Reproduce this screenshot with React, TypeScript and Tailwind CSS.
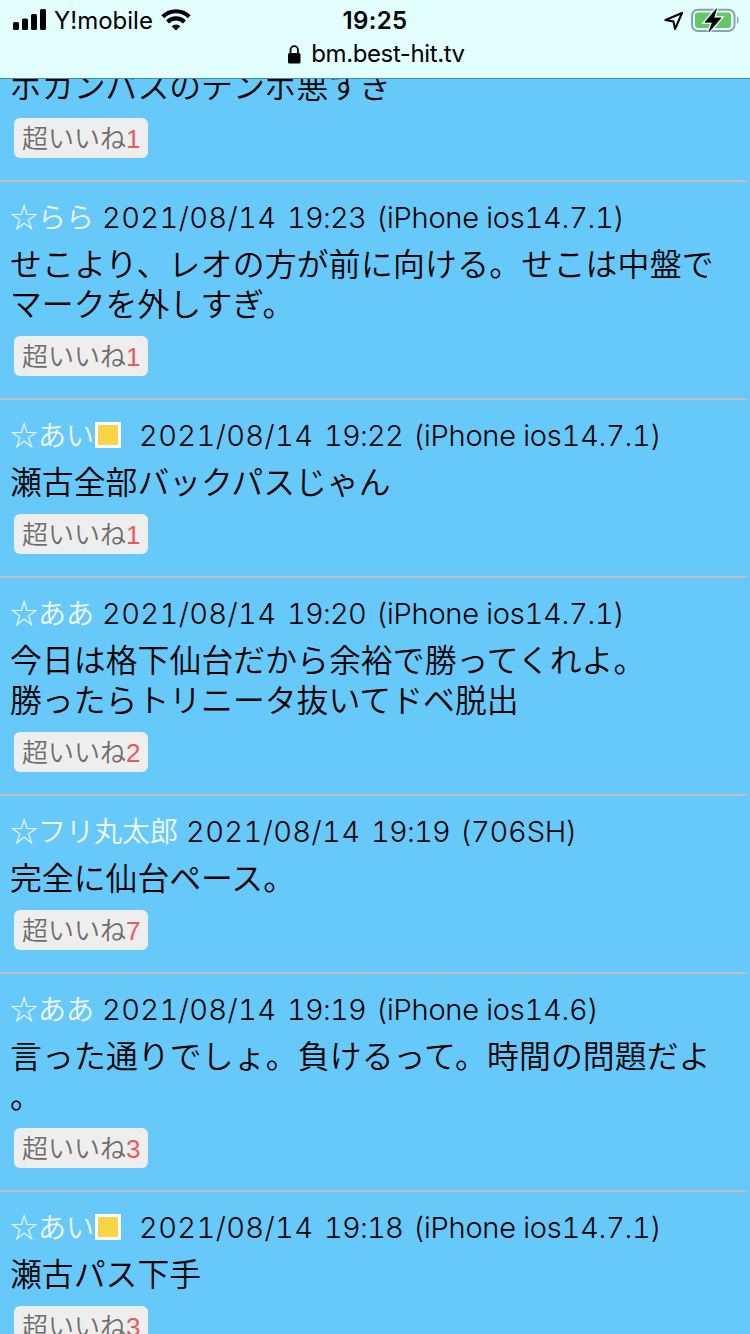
type Line = { text: string; spacing?: string };

type Post = {
  name: string;
  card?: boolean;
  date: string;
  time: string;
  device: string;
  lines: Line[];
  likes: number;
};

const posts: Post[] = [
  {
    name: "☆らら",
    date: "2021/08/14",
    time: "19:23",
    device: "(iPhone ios14.7.1)",
    lines: [{ text: "せこより、レオの方が前に向ける。せこは中盤で", spacing: "tracking-[0.28px]" }, { text: "マークを外しすぎ。" }],
    likes: 1,
  },
  { name: "☆あい", card: true, date: "2021/08/14", time: "19:22", device: "(iPhone ios14.7.1)", lines: [{ text: "瀬古全部バックパスじゃん" }], likes: 1 },
  {
    name: "☆ああ",
    date: "2021/08/14",
    time: "19:20",
    device: "(iPhone ios14.7.1)",
    lines: [{ text: "今日は格下仙台だから余裕で勝ってくれよ。", spacing: "tracking-[0.1px]" }, { text: "勝ったらトリニータ抜いてドベ脱出" }],
    likes: 2,
  },
  { name: "☆フリ丸太郎", date: "2021/08/14", time: "19:19", device: "(706SH)", lines: [{ text: "完全に仙台ペース。" }], likes: 7 },
  {
    name: "☆ああ",
    date: "2021/08/14",
    time: "19:19",
    device: "(iPhone ios14.6)",
    lines: [{ text: "言った通りでしょ。負けるって。時間の問題だよ", spacing: "tracking-[0.17px]" }, { text: "。" }],
    likes: 3,
  },
  { name: "☆あい", card: true, date: "2021/08/14", time: "19:18", device: "(iPhone ios14.7.1)", lines: [{ text: "瀬古パス下手" }], likes: 3 },
];

function LikeButton({ count }: { count: number }) {
  return (
    <button className="ml-[14px] mt-[14px] mb-[22px] flex h-10 w-[134px] items-center rounded-[6px] bg-[#eeeeee] pl-2 text-[26px] leading-10 whitespace-nowrap text-[#6e6e6e]">
      <span className="w-[104px] pb-[3px]">超いいね</span>
      <span className="pt-px font-['Liberation_Sans','Noto_Sans_CJK_JP',sans-serif] font-normal text-[#e35d5b]">{count}</span>
    </button>
  );
}

function Body({ lines }: { lines: Line[] }) {
  return (
    <div className="pl-[10px] text-[31.8px] leading-10 whitespace-nowrap">
      {lines.map((line) => (
        <p key={line.text} className={line.spacing ?? "tracking-[0.05px]"}>
          {line.text}
        </p>
      ))}
    </div>
  );
}

function PostItem({ post }: { post: Post }) {
  return (
    <article className="w-[747px] border-t-2 border-[#bdbdbd]">
      <div className="flex h-[60px] items-center pt-[12px] pl-[10px] whitespace-nowrap">
        <span className="pb-[5px] text-[28px] leading-10 text-[#f2faff]">{post.name}</span>
        {post.card && <span className="mr-[10px] mb-[3px] ml-px size-[26px] border-[3px] border-white bg-[#f8d547]" />}
        <span className="ml-[8px] flex font-['Inter','Noto_Sans_CJK_JP',sans-serif] text-[29px] leading-10 font-[350] text-black tabular-nums">
          <span className="w-[185px] tracking-[0.4px]">{post.date}</span>
          <span className="w-[89px] tracking-[-0.8px]">{post.time}</span>
          <span className="tracking-[-0.25px]">{post.device}</span>
        </span>
      </div>
      <Body lines={post.lines} />
      <LikeButton count={post.likes} />
    </article>
  );
}

function SignalIcon() {
  return (
    <svg width="34" height="22" viewBox="0 0 34 22">
      <rect x="0" y="13" width="6" height="8" rx="1.6" />
      <rect x="9" y="9.5" width="6" height="11.5" rx="1.6" />
      <rect x="18" y="5" width="6" height="16" rx="1.6" />
      <rect x="27" y="0" width="6" height="21" rx="1.6" />
    </svg>
  );
}

function WifiIcon() {
  return (
    <svg width="30" height="22" viewBox="0 0 30 22" fill="none" stroke="#000" strokeWidth="4.2">
      <path d="M1.8 7.7a18.7 18.7 0 0 1 26.4 0" />
      <path d="M6.6 12.9a11.9 11.9 0 0 1 16.8 0" />
      <path d="M15 21.6l-4.3-4.3a6.1 6.1 0 0 1 8.6 0z" fill="#000" stroke="none" />
    </svg>
  );
}

function BatteryIcon() {
  const bolt = "M25.5.8 14 14.2h7.4L18 23.7 30 10h-7.2z";
  return (
    <svg width="49" height="25" viewBox="0 0 49 25">
      <rect x="1" y="1.7" width="42.5" height="21.3" rx="6" fill="none" stroke="#8aa3ac" strokeWidth="2" />
      <path d="M46 8.8c2.2.7 2.2 6.5 0 7.2z" fill="#8aa3ac" />
      <rect x="4" y="4.6" width="36" height="15.5" rx="3" fill="#67c665" />
      <path d={bolt} fill="#e2feff" stroke="#e2feff" strokeWidth="3.4" />
      <path d={bolt} fill="#000" stroke="#000" strokeWidth="0.8" />
    </svg>
  );
}

function StatusBar() {
  return (
    <header className="relative z-10 h-[79px] shrink-0 border-b border-[#4585a6] bg-[#e2feff] font-['Inter',sans-serif] font-normal text-black">
      <div className="grid h-10 grid-cols-[1fr_auto_1fr] items-center">
        <div className="flex items-center pl-[13px]">
          <SignalIcon />
          <span className="ml-[7px] w-[98px] pt-px text-[24px] leading-8 whitespace-nowrap">Y!mobile</span>
          <span className="ml-[9px]"><WifiIcon /></span>
        </div>
        <div className="pt-[2px] text-[24px] leading-8 font-semibold tracking-[0.4px]">19:25</div>
        <div className="flex items-center justify-end pr-[10px]">
          <svg width="20" height="20" viewBox="0 0 20 20" fill="none" stroke="#000" strokeWidth="2" strokeLinejoin="round" className="mr-[7px]">
            <path d="M18 3 1.5 10l8 1.5L11 19z" />
          </svg>
          <BatteryIcon />
        </div>
      </div>
      <div className="flex h-7 items-center justify-center pl-[3px]">
        <svg width="13" height="19" viewBox="0 0 13 19">
          <rect x="0" y="8" width="12.5" height="10.5" rx="1.6" />
          <path d="M2.5 9V5.2a3.75 4 0 0 1 7.5 0V9" fill="none" stroke="#000" strokeWidth="1.8" />
        </svg>
        <span className="ml-[10px] text-[24px] leading-7 tracking-[-0.4px]">bm.best-hit.tv</span>
      </div>
    </header>
  );
}

export default function App() {
  return (
    <div className="flex h-[1334px] w-[750px] flex-col overflow-hidden bg-[#67c8fa] font-['Noto_Sans_CJK_JP',sans-serif] font-[350] text-black">
      <StatusBar />
      <main className="-mt-[15px]">
        <Body lines={[{ text: "ボカンパスのテンポ悪すぎ" }]} />
        <LikeButton count={1} />
        {posts.map((post) => (
          <PostItem key={post.time + post.name} post={post} />
        ))}
      </main>
    </div>
  );
}
